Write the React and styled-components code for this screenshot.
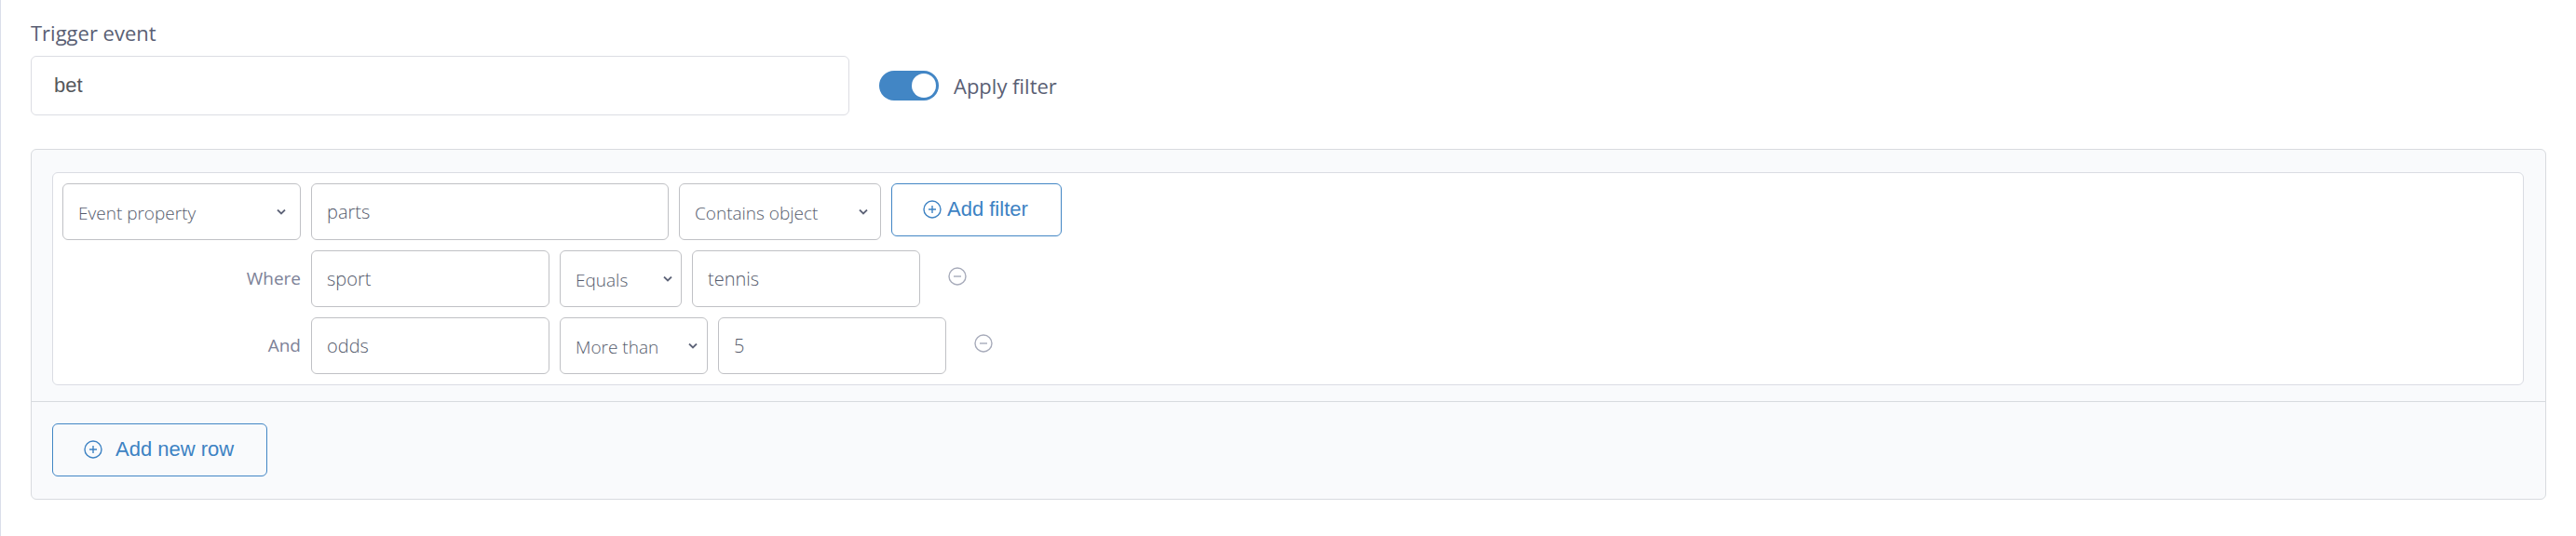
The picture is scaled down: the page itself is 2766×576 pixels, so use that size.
import React, { useState } from "react";
import styled, { createGlobalStyle } from "styled-components";

const PlusIcon = () => (
  <svg width="20" height="20" viewBox="0 0 20 20" fill="none" stroke="currentColor" strokeWidth="1.4" aria-hidden="true">
    <circle cx="10" cy="10" r="9" />
    <path d="M10 6v8M6 10h8" />
  </svg>
)

const MinusIcon = () => (
  <svg width="20" height="20" viewBox="0 0 20 20" fill="none" stroke="currentColor" strokeWidth="1.4" aria-hidden="true">
    <circle cx="10" cy="10" r="9" />
    <path d="M6 10h8" />
  </svg>
)

const Select = ({ label, options, width, arrow }) => {
  const [value, setValue] = useState(options[0]);
  return (
    <SelectBox $width={width} $arrow={arrow}>
      <select aria-label={label} value={value} onChange={(e) => setValue(e.target.value)}>
        {options.map(o => <option key={o}>{o}</option>)}
      </select>
      <svg width="10" height="6" viewBox="0 0 10 6" fill="none" stroke="#5e6478" strokeWidth="1.8" aria-hidden="true">
        <path d="M1 0.5l4 4 4-4" />
      </svg>
    </SelectBox>
  )
}

const conditions = [
  { id: 1, join: 'Where', property: 'sport', operators: ['Equals', 'More than', 'Less than'], width: 131, arrow: 10, value: 'tennis' },
  { id: 2, join: 'And', property: 'odds', operators: ['More than', 'Less than', 'Equals'], width: 159, arrow: 11, value: '5' },
]

export default function App() {
  const [applyFilter, setApplyFilter] = useState(true);
  const [rows, setRows] = useState(conditions);

  return (
    <>
      <GlobalStyle />
      <Page>
        <FieldLabel htmlFor="trigger">Trigger event</FieldLabel>
        <TriggerRow>
          <TriggerInput id="trigger" type="text" defaultValue="bet" />
          <Toggle>
            <input type="checkbox" role="switch" checked={applyFilter} onChange={(e) => setApplyFilter(e.target.checked)} />
            Apply filter
          </Toggle>
        </TriggerRow>

        <Panel>
          <PanelBody>
            <FilterCard>
              <FilterRow>
                <Select label="Source" options={['Event property', 'User property']} width={256} arrow={16} />
                <Input aria-label="Property" defaultValue="parts" $width={384} />
                <Select label="Operator" options={['Contains object', 'Equals']} width={217} arrow={14} />
                <OutlineButton type="button" $gap={6}>
                  <PlusIcon />
                  Add filter
                </OutlineButton>
              </FilterRow>
              {rows.map(row => (
                <FilterRow key={row.id}>
                  <JoinLabel htmlFor={`property-${row.id}`}>{row.join}</JoinLabel>
                  <Input id={`property-${row.id}`} defaultValue={row.property} $width={256} />
                  <Select label="Operator" options={row.operators} width={row.width} arrow={row.arrow} />
                  <Input aria-label="Value" defaultValue={row.value} $width={245} />
                  <RemoveButton
                    type="button"
                    aria-label="Remove condition"
                    onClick={() => setRows(rows.filter(r => r.id !== row.id))}
                  >
                    <MinusIcon />
                  </RemoveButton>
                </FilterRow>
              ))}
            </FilterCard>
          </PanelBody>
          <PanelFooter>
            <OutlineButton type="button" $gap={14}>
              <PlusIcon />
              Add new row
            </OutlineButton>
          </PanelFooter>
        </Panel>
      </Page>
    </>
  )
}

const GlobalStyle = createGlobalStyle`
  * {
    box-sizing: border-box;
  }
  body {
    margin: 0;
    background: #fff;
    font-family: "Open Sans", "Noto Sans", sans-serif;
    color: #5a6074;
  }
`

const Page = styled.main`
  min-height: 100vh;
  padding: 19px 32px;
  border-left: 1px solid #dadeea;
`

const FieldLabel = styled.label`
  display: block;
  margin-bottom: 9px;
  font-size: 22px;
  line-height: 32px;
`

const TriggerRow = styled.div`
  display: flex;
  align-items: center;
  gap: 32px;
  margin-bottom: 36px;
`

const TriggerInput = styled.input`
  width: 879px;
  max-width: 100%;
  height: 64px;
  padding: 0 24px;
  border: 1px solid #dcdde3;
  border-radius: 6px;
  background: #fff;
  color: #56585c;
  font-family: "Liberation Sans", Arial, sans-serif;
  font-size: 22px;
`

const Toggle = styled.label`
  display: flex;
  align-items: center;
  gap: 16px;
  font-size: 22px;
  line-height: 32px;
  cursor: pointer;

  input {
    appearance: none;
    display: flex;
    justify-content: flex-start;
    width: 64px;
    height: 32px;
    margin: 0;
    padding: 3px;
    border-radius: 16px;
    background: #c3c7d1;
    cursor: pointer;

    &::before {
      content: '';
      width: 26px;
      height: 26px;
      border-radius: 50%;
      background: #fff;
    }

    &:checked {
      justify-content: flex-end;
      background: #4286c5;
    }
  }
`

const Panel = styled.section`
  border: 1px solid #d8dbdf;
  border-radius: 6px;
  background: #f9fafc;
`

const PanelBody = styled.div`
  padding: 24px 23px 17px 22px;
`

const PanelFooter = styled.div`
  padding: 23px 22px 24px;
  border-top: 1px solid #d8dbdf;
`

const FilterCard = styled.div`
  display: flex;
  flex-direction: column;
  gap: 11px;
  padding: 11px 10px;
  border: 1px solid #dadce3;
  border-radius: 6px;
  background: #fff;
`

const FilterRow = styled.div`
  display: flex;
  align-items: flex-start;
  gap: 11px;
`

const Input = styled.input`
  width: ${p => p.$width}px;
  height: 61px;
  padding: 0 16px;
  border: 1px solid #c0c1c5;
  border-radius: 6px;
  background: #fff;
  color: #555b6c;
  font-family: inherit;
  font-size: 20px;
  font-weight: 300;
`

const SelectBox = styled.div`
  display: grid;
  align-items: center;
  width: ${p => p.$width}px;

  select, svg {
    grid-area: 1 / 1;
  }
  select {
    appearance: none;
    width: 100%;
    height: 61px;
    padding: 2px 16px 0;
    border: 1px solid #c0c1c5;
    border-radius: 6px;
    background: #fff;
    color: #555b6c;
    font-family: inherit;
    font-size: 19px;
    font-weight: 300;
  }
  svg {
    justify-self: end;
    margin-right: ${p => p.$arrow}px;
    pointer-events: none;
  }
`

const JoinLabel = styled.label`
  width: 256px;
  color: #7d8298;
  font-size: 19px;
  font-weight: 500;
  line-height: 60px;
  text-align: right;
`

const OutlineButton = styled.button`
  display: inline-flex;
  align-items: center;
  gap: ${p => p.$gap}px;
  height: 57px;
  padding: 0 35px 1px 33px;
  border: 1px solid #4286c5;
  border-radius: 6px;
  background: transparent;
  color: #3d82c3;
  font-family: "Liberation Sans", Arial, sans-serif;
  font-size: 22px;
  cursor: pointer;
`

const RemoveButton = styled.button`
  display: flex;
  align-items: center;
  height: 56px;
  padding: 0 19px;
  border: none;
  background: none;
  color: #a7abba;
  cursor: pointer;
`
